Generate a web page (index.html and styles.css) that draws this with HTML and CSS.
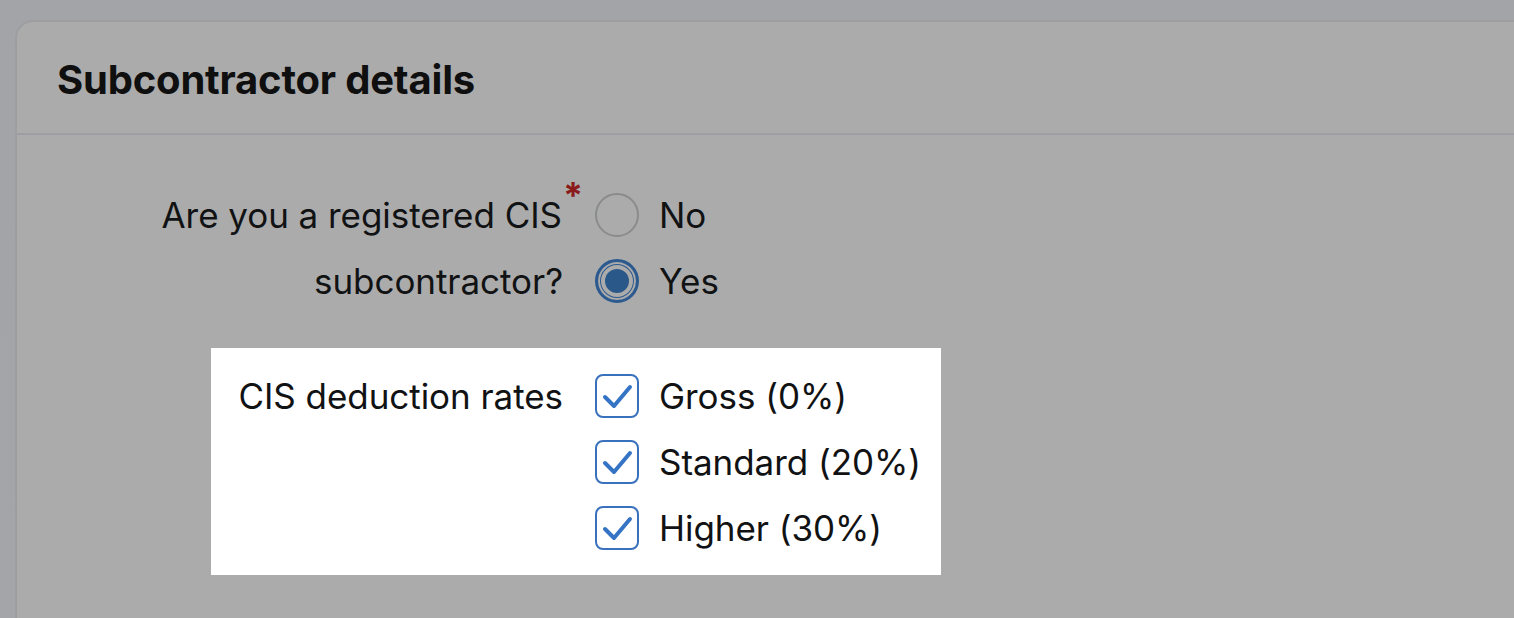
FILE: index.html
```
<!DOCTYPE html>
<html lang="en">
<head>
    <meta charset="UTF-8">
    <meta name="viewport" content="width=device-width, initial-scale=1.0">
    <title>Subcontractor details</title>
    <link rel="stylesheet" href="styles.css">
</head>
<body>
    <div class="card">
        <div class="card-header">
            <h1>Subcontractor details</h1>
        </div>
        <div class="card-body">
            <div class="field">
                <div class="field-label">Are you a registered CIS<span class="required">*</span><br>subcontractor?</div>
                <div class="options">
                    <label class="option">
                        <span class="radio"></span>
                        <span>No</span>
                    </label>
                    <label class="option">
                        <span class="radio checked"><span class="dot"></span></span>
                        <span>Yes</span>
                    </label>
                </div>
            </div>

            <div class="field field-focus">
                <div class="field-label">CIS deduction rates</div>
                <div class="options">
                    <label class="option">
                        <span class="checkbox">
                            <svg viewBox="0 0 44 44" width="44" height="44"><path d="M10 23 L19 32 L35 13" fill="none" stroke="#3574c4" stroke-width="4" stroke-linecap="round" stroke-linejoin="round"/></svg>
                        </span>
                        <span>Gross (0%)</span>
                    </label>
                    <label class="option">
                        <span class="checkbox">
                            <svg viewBox="0 0 44 44" width="44" height="44"><path d="M10 23 L19 32 L35 13" fill="none" stroke="#3574c4" stroke-width="4" stroke-linecap="round" stroke-linejoin="round"/></svg>
                        </span>
                        <span>Standard (20%)</span>
                    </label>
                    <label class="option">
                        <span class="checkbox">
                            <svg viewBox="0 0 44 44" width="44" height="44"><path d="M10 23 L19 32 L35 13" fill="none" stroke="#3574c4" stroke-width="4" stroke-linecap="round" stroke-linejoin="round"/></svg>
                        </span>
                        <span>Higher (30%)</span>
                    </label>
                </div>
            </div>
        </div>
    </div>
</body>
</html>
```

FILE: styles.css
```
html, body {
    height: 100%;
}
body {
    margin: 0;
    overflow: hidden;
    background: linear-gradient(to bottom, #a2a4a8, #a3a5a9);
    font-family: "Inter", "Liberation Sans", sans-serif;
    color: #111213;
}
.card {
    margin: 20px 0 0 15px;
    width: 1600px;
    height: 800px;
    background-color: #ababab;
    border: 2px solid #9e9ea2;
    border-radius: 18px 0 0 0;
}
.card-header {
    height: 111px;
    display: flex;
    align-items: center;
    padding: 0 40px;
    border-bottom: 2px solid #9e9ea2;
}
.card-header h1 {
    margin: 0;
    font-size: 40px;
    font-weight: 700;
    letter-spacing: -0.2px;
    color: #0f0f10;
    padding-top: 4px;
}
.card-body {
    padding: 58px 0 0 140px;
    font-size: 35px;
    letter-spacing: -0.05px;
}
.field {
    display: grid;
    grid-template-columns: 406px auto;
    column-gap: 32px;
    align-items: start;
}
.field-label {
    text-align: right;
    line-height: 66px;
    margin: -11px 0 -11px;
    white-space: nowrap;
}
.required {
    color: #8b1a1a;
    font-size: 36px;
    font-weight: 700;
    vertical-align: 20px;
    line-height: 0;
    margin-left: 1px;
    margin-right: -20px;
}
.options {
    display: flex;
    flex-direction: column;
    gap: 22px;
}
.option {
    display: flex;
    align-items: center;
    gap: 20px;
    height: 44px;
}
.radio {
    width: 40px;
    height: 40px;
    border: 2px solid #8a8b8d;
    border-radius: 50%;
    display: flex;
    align-items: center;
    justify-content: center;
}
.radio.checked {
    border: 3px solid #2c5a8f;
    box-shadow: inset 0 0 0 2px #ababab, inset 0 0 0 3px #2c5a8f;
    width: 38px;
    height: 38px;
}
.dot {
    width: 24px;
    height: 24px;
    border-radius: 50%;
    background-color: #2a5989;
}
.checkbox {
    width: 40px;
    height: 40px;
    border: 2px solid #3a71bd;
    border-radius: 8px;
    background-color: #fff;
    position: relative;
}
.checkbox svg {
    position: absolute;
    left: -2px;
    top: -2px;
}
.field-focus {
    margin: 45px 0 0 54px;
    width: max-content;
    padding: 26px 20px 25px 24px;
    grid-template-columns: 328px auto;
    background-color: #fff;
}
```
